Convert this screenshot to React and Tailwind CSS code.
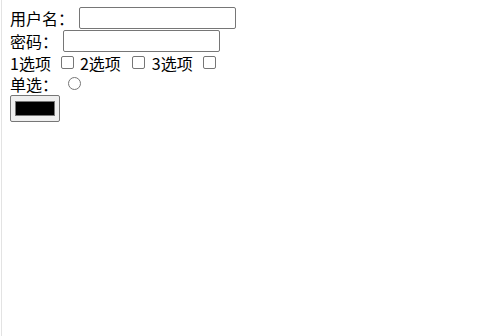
export default function App() {
  const font = { fontFamily: '"Microsoft YaHei", "Noto Sans CJK SC", "Noto Sans", sans-serif' };
  return (
    <div className="min-h-[336px] bg-white">
      <div
        className="ml-px min-h-[336px] border-l border-[#e3e3e3] pl-[8px] pt-[7px] text-[16px] leading-[20px] text-black"
        style={font}
      >
        {/* 用户名 */}
        <div className="flex h-[22px] items-center">
          <span>用户名：</span>
          <input
            type="text"
            className="ml-[5px] h-[22px] w-[157px] rounded-[2px] border border-[#767676] bg-white px-1 outline-none"
          />
        </div>
        {/* 密码 */}
        <div className="mt-px flex h-[22px] items-center">
          <span>密码：</span>
          <input
            type="password"
            className="ml-[5px] h-[22px] w-[157px] rounded-[2px] border border-[#767676] bg-white px-1 outline-none"
          />
        </div>
        {/* 多选 */}
        <div className="flex h-[21px] items-center">
          <span>1选项</span>
          <input type="checkbox" className="ml-[10px] h-[13px] w-[13px] appearance-none rounded-[2px] border border-[#767676] bg-white" />
          <span className="ml-[6px]">2选项</span>
          <input type="checkbox" className="ml-[11px] h-[13px] w-[13px] appearance-none rounded-[2px] border border-[#767676] bg-white" />
          <span className="ml-[7px]">3选项</span>
          <input type="checkbox" className="ml-[10px] h-[13px] w-[13px] appearance-none rounded-[2px] border border-[#767676] bg-white" />
        </div>
        {/* 单选 */}
        <div className="flex h-[21px] items-center">
          <span>单选：</span>
          <input type="radio" className="ml-[10px] h-[13px] w-[13px] appearance-none rounded-full border border-[#767676] bg-white" />
        </div>
        {/* 颜色 */}
        <div className="mt-px flex h-[27px] w-[50px] items-center justify-center rounded-[2px] border border-[#767676] bg-[#efefef]">
          <div className="h-[15px] w-[40px] border border-[#777777] bg-black" />
        </div>
      </div>
    </div>
  );
}
